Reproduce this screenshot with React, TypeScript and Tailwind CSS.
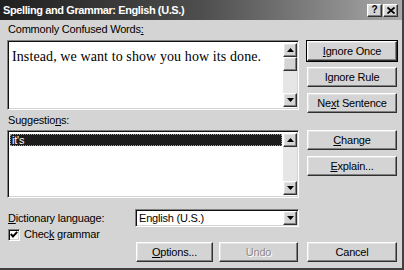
import React from 'react';

const ui = "font-['Tahoma','Liberation_Sans',sans-serif] text-[11px] leading-[13px] tracking-[-0.2px] text-black";
const raised =
  'border border-t-white border-l-white border-r-[#303030] border-b-[#303030] shadow-[inset_-1px_-1px_0_#808080,inset_1px_1px_0_#e4e4e4] bg-[#d4d4d4]';
const sunken =
  'border border-t-[#808080] border-l-[#808080] border-r-white border-b-white shadow-[inset_1px_1px_0_#101010,inset_-1px_-1px_0_#d4d4d4]';

const Arrow: React.FC<{ up?: boolean }> = ({ up }) => (
  <svg width="7" height="4" viewBox="0 0 7 4">
    {up ? <path d="M3.5 0 L7 4 L0 4 Z" fill="#000" /> : <path d="M0 0 L7 0 L3.5 4 Z" fill="#000" />}
  </svg>
);

const ScrollBar: React.FC<{ thumb?: boolean }> = ({ thumb }) => (
  <div className="w-[14px] h-full flex flex-col bg-[#e6e6e6]">
    <div className={`${raised} h-[14px] flex items-center justify-center`}>
      <Arrow up />
    </div>
    {thumb && <div className={`${raised} h-[14px]`} />}
    <div className="flex-1" />
    <div className={`${raised} h-[14px] flex items-center justify-center`}>
      <Arrow />
    </div>
  </div>
);

const Btn: React.FC<{ children: React.ReactNode; width?: string; isDefault?: boolean; disabled?: boolean }> = ({
  children,
  width = 'w-[90px]',
  isDefault,
  disabled,
}) => (
  <div
    className={`${width} h-[20px] flex items-center justify-center ${raised} ${
      isDefault ? 'outline outline-1 outline-black' : ''
    } ${disabled ? 'text-[#8c8c8c] [text-shadow:1px_1px_0_#fff]' : ''}`}
  >
    <span>{children}</span>
  </div>
);

const U: React.FC<{ children: React.ReactNode }> = ({ children }) => <span className="underline">{children}</span>;

const App: React.FC = () => {
  return (
    <div className={`w-[404px] h-[270px] bg-[#d4d4d4] flex flex-col overflow-hidden border-r-2 border-b-2 border-r-[#404040] border-b-[#404040] ${ui}`}>
      {/* Title bar */}
      <div className="h-[20px] shrink-0 flex items-center pl-[3px] pr-[4px] bg-gradient-to-r from-[#202020] via-[#4e4e4e] to-[#aaaaaa]">
        <span className="flex-1 text-white font-bold text-[11px] tracking-[-0.4px]">
          Spelling and Grammar: English (U.S.)
        </span>
        <div className={`${raised} w-[15px] h-[13px] flex items-center justify-center font-bold text-[10px] leading-none`}>?</div>
        <div className={`${raised} ml-[1px] w-[15px] h-[13px] flex items-center justify-center`}>
          <svg width="8" height="7" viewBox="0 0 8 7">
            <path d="M0.5 0.5 L7.5 6.5 M7.5 0.5 L0.5 6.5" stroke="#000" strokeWidth="1.8" />
          </svg>
        </div>
      </div>

      <div className="flex-1 flex pl-[7px] pt-[3px] gap-[8px]">
        {/* Left column */}
        <div className="w-[292px] flex flex-col">
          <div className="h-[13px] pl-[1px]">
            Commonly Confused Words<U>:</U>
          </div>
          <div className={`${sunken} mt-[4px] h-[70px] bg-white flex p-[2px] pr-[1px]`}>
            <div className="flex-1 pl-[2px] pt-[6px] font-['Liberation_Serif',serif] text-[14px] leading-[16px] tracking-[0.1px] whitespace-nowrap">
              Instead, we want to show you how its done.
            </div>
            <ScrollBar thumb />
          </div>

          <div className="h-[13px] mt-[4px] pl-[1px]">
            Suggestio<U>n</U>s:
          </div>
          <div className={`${sunken} mt-[3px] h-[68px] bg-white flex p-[2px] pr-[1px]`}>
            <div className="flex-1 pr-[1px]">
              <div className="h-[12px] mt-[1px] bg-[#1c1c1c] text-white leading-[12px] pl-[1px] border border-dotted border-[#9a9a9a]">
                <span className="relative -top-[1px]">it's</span>
              </div>
            </div>
            <ScrollBar />
          </div>

          <div className="mt-[11px] flex items-center h-[18px]">
            <div className="w-[128px] pl-[1px]">
              <U>D</U>ictionary language:
            </div>
            <div className={`${sunken} flex-1 h-[18px] bg-white flex items-center p-[2px] pr-[1px]`}>
              <span className="flex-1 pl-[1px]">English (U.S.)</span>
              <div className={`${raised} w-[14px] h-[14px] flex items-center justify-center`}>
                <Arrow />
              </div>
            </div>
          </div>

          <div className="h-[13px] mt-[1px] flex items-center pl-[1px]">
            <div className={`${sunken} w-[12px] h-[12px] bg-white flex items-center justify-center`}>
              <svg width="8" height="7" viewBox="0 0 8 7">
                <path d="M0.8 3 L3 5.5 L7.2 0.8" stroke="#000" strokeWidth="1.9" fill="none" />
              </svg>
            </div>
            <span className="ml-[4px]">
              Chec<U>k</U> grammar
            </span>
          </div>

          <div className="mt-[1px] flex gap-[6px] pl-[129px]">
            <Btn width="w-[77px]">
              <U>O</U>ptions...
            </Btn>
            <Btn width="w-[79px]" disabled>
              Undo
            </Btn>
          </div>
        </div>

        {/* Right column */}
        <div className="w-[90px] flex flex-col pt-[18px]">
          <Btn isDefault>
            <U>I</U>gnore Once
          </Btn>
          <div className="mt-[6px]">
            <Btn>
              I<U>g</U>nore Rule
            </Btn>
          </div>
          <div className="mt-[6px]">
            <Btn>
              Ne<U>x</U>t Sentence
            </Btn>
          </div>
          <div className="mt-[17px]">
            <Btn>
              <U>C</U>hange
            </Btn>
          </div>
          <div className="mt-[6px]">
            <Btn>
              <U>E</U>xplain...
            </Btn>
          </div>
          <div className="mt-[66px]">
            <Btn>Cancel</Btn>
          </div>
        </div>
      </div>
    </div>
  );
};

export default App;
